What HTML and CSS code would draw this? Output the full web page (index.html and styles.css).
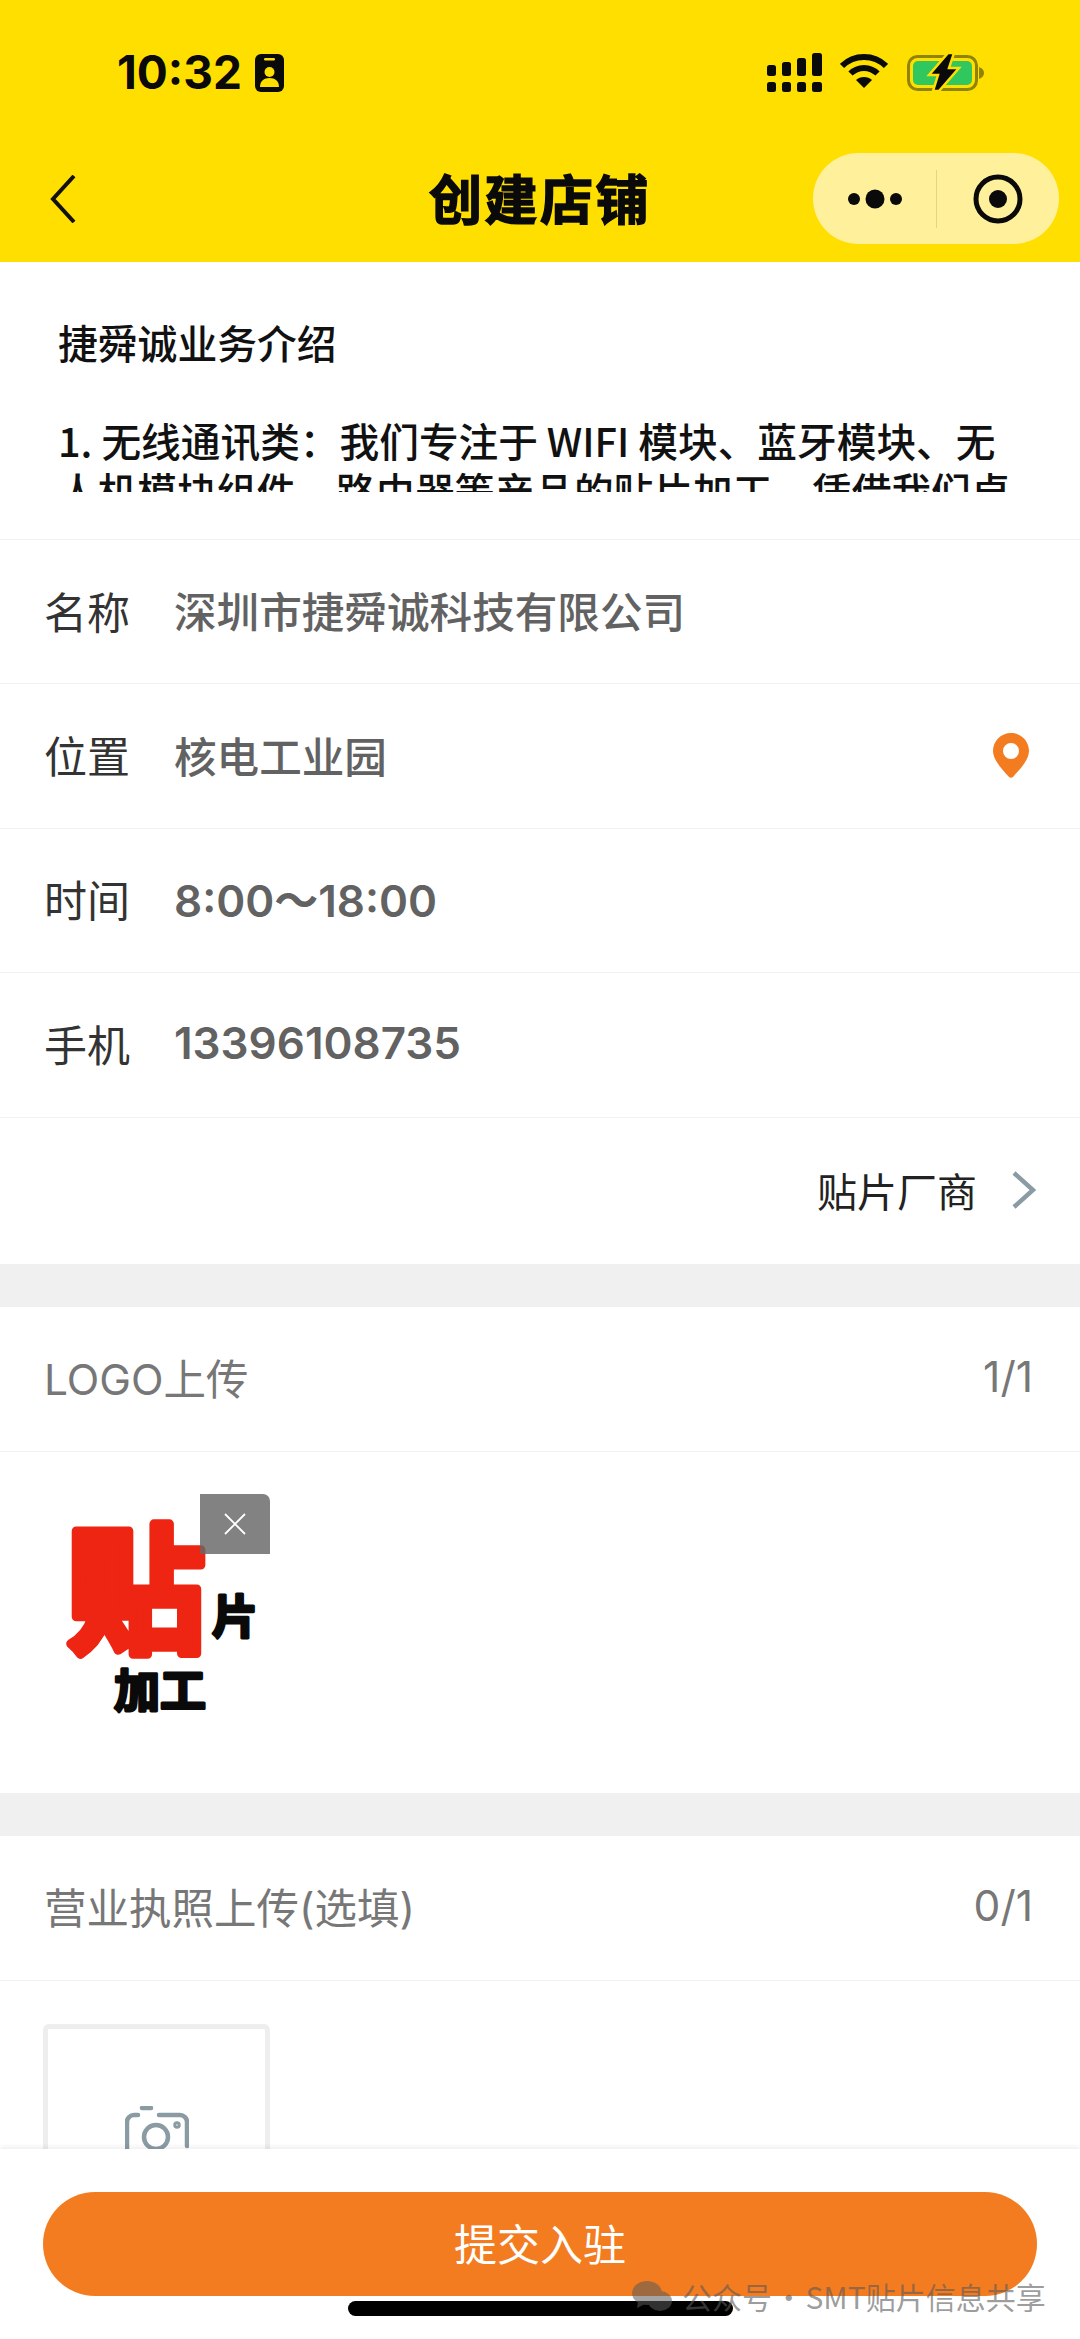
FILE: index.html
```html
<!DOCTYPE html>
<html lang="zh-CN">
<head>
<meta charset="utf-8">
<title>创建店铺</title>
<link rel="stylesheet" href="styles.css">
</head>
<body>
<div class="app">
  <header class="top">
    <div class="status">
      <div class="status-left">
        <span class="time">10:32</span>
        <svg class="badge" width="29" height="38" viewBox="0 0 29 38"><rect width="29" height="38" rx="6" fill="#0a0a0a"/><rect x="9" y="4" width="11" height="2.5" rx="1.2" fill="#ffdf00"/><circle cx="14.5" cy="18" r="5" fill="#ffdf00"/><path d="M5 33c0-6 4-9 9.500-9s9.500 3 9.500 9z" fill="#ffdf00"/></svg>
      </div>
      <div class="status-right">
        <svg width="55" height="39" viewBox="0 0 55 39" fill="#0a0a0a"><rect x="0" y="12" width="9" height="11" rx="2.500"/><rect x="15" y="9" width="9" height="14" rx="2.500"/><rect x="30" y="5" width="9" height="18" rx="2.500"/><rect x="45" y="0" width="10" height="23" rx="2.500"/><rect x="0" y="29" width="9" height="10" rx="2.500"/><rect x="15" y="29" width="9" height="10" rx="2.500"/><rect x="30" y="29" width="9" height="10" rx="2.500"/><rect x="45" y="29" width="10" height="10" rx="2.500"/></svg>
        <svg width="48" height="35" viewBox="0 0 48 35" fill="none" stroke="#0a0a0a" stroke-width="6"><path d="M2 13C14 1 34 1 46 13"/><path d="M10.500 20.500C18 13 30 13 37.500 20.500"/><path d="M24 35l-8-8c4-4 12-4 16 0z" fill="#0a0a0a" stroke="none"/></svg>
        <svg class="battery" width="79" height="38" viewBox="0 0 79 38"><rect x="1.500" y="3.500" width="68" height="33" rx="9" fill="none" stroke="#8f8300" stroke-width="3"/><rect x="6" y="8" width="59" height="24" rx="5" fill="#30c85e"/><path d="M72 14c3 1 5 3 5 6s-2 5-5 6z" fill="#8f8300"/><path d="M41 0L22 22h9l-5 16 6 0 20-23h-10l5-15z" fill="#0a0a0a" stroke="#ffdf00" stroke-width="2.500"/></svg>
      </div>
    </div>
    <div class="nav">
      <svg class="back" width="26" height="48" viewBox="0 0 26 48" fill="none" stroke="#111" stroke-width="4"><path d="M24 1L3 24l21 23"/></svg>
      <h1 class="title">创建店铺</h1>
      <div class="capsule">
        <div class="capsule-more">
          <svg width="58" height="20" viewBox="0 0 58 20" fill="#0a0a0a"><circle cx="6" cy="10" r="6"/><circle cx="27" cy="10" r="9.500"/><circle cx="48" cy="10" r="6"/></svg>
        </div>
        <div class="capsule-close">
          <svg width="50" height="50" viewBox="0 0 50 50"><circle cx="25" cy="25" r="22" fill="none" stroke="#0a0a0a" stroke-width="5"/><circle cx="25" cy="25" r="9" fill="#0a0a0a"/></svg>
        </div>
      </div>
    </div>
  </header>

  <section class="intro">
    <h2 class="intro-title">捷舜诚业务介绍</h2>
    <div class="intro-clip">
      <p class="intro-body">1. 无线通讯类：我们专注于 WIFI 模块、蓝牙模块、无<br>人机模块组件、路由器等产品的贴片加工，凭借我们卓</p>
    </div>
  </section>

  <section class="form">
    <div class="row"><span class="label">名称</span><span class="value">深圳市捷舜诚科技有限公司</span></div>
    <div class="row"><span class="label">位置</span><span class="value">核电工业园</span>
      <svg class="pin" width="36" height="45" viewBox="0 0 36 45"><path fill-rule="evenodd" fill="#f47c20" d="M18 0c10 0 18 8 18 18 0 9-9 18-16 26-1 1-3 1-4 0C9 36 0 27 0 18 0 8 8 0 18 0zm0 10a8 8 0 1 0 0 16 8 8 0 0 0 0-16z"/></svg>
    </div>
    <div class="row"><span class="label">时间</span><span class="value num">8:00～18:00</span></div>
    <div class="row"><span class="label">手机</span><span class="value num">13396108735</span></div>
    <div class="row-category">
      <span class="category">贴片厂商</span>
      <svg width="24" height="38" viewBox="0 0 24 38" fill="none" stroke="#8a9ba3" stroke-width="4.500"><path d="M2 2l19 17L2 36"/></svg>
    </div>
  </section>

  <section class="block">
    <div class="block-head"><span>LOGO上传</span><span>1/1</span></div>
    <div class="logo-area">
      <div class="logo">
        <svg width="226" height="226" viewBox="0 0 226 226">
          <text class="logo-main" x="23" y="147">贴</text>
          <text class="logo-small" x="191" y="139" text-anchor="middle">片</text>
          <text class="logo-small" x="116" y="213" text-anchor="middle">加工</text>
        </svg>
        <div class="remove">
          <svg width="24" height="24" viewBox="0 0 24 24" fill="none" stroke="#fff" stroke-width="1.800"><path d="M2 2l20 20M22 2L2 22"/></svg>
        </div>
      </div>
    </div>
  </section>

  <section class="block">
    <div class="block-head"><span>营业执照上传(选填)</span><span>0/1</span></div>
    <div class="upload-area">
      <div class="upload">
        <svg width="64" height="56" viewBox="0 0 64 56" fill="none" stroke="#8a9ba3" stroke-width="4.500" stroke-linecap="round"><path d="M17 2h9"/><path d="M13 9H9a7 7 0 0 0-7 7v40"/><path d="M34 9h21a7 7 0 0 1 7 7v24"/><circle cx="31" cy="31" r="12"/><circle cx="52" cy="19" r="1.500"/></svg>
      </div>
    </div>
  </section>

  <footer class="bottom">
    <button class="submit" type="button">提交入驻</button>
    <div class="home"></div>
  </footer>

  <div class="watermark">
    <svg width="40" height="30" viewBox="0 0 40 30" fill="#5a5a5a"><ellipse cx="15" cy="12" rx="15" ry="12"/><path d="M6 20l-1 7 8-4z"/><ellipse cx="28" cy="20" rx="12" ry="10"/></svg>
    <span>公众号 · SMT贴片信息共享</span>
  </div>
</div>
</body>
</html>
```
FILE: styles.css
```css
* { box-sizing: border-box; }
html, body { margin: 0; padding: 0; background: #fff; }
body { font-family: Inter, "Noto Sans CJK SC", sans-serif; color: #111; }

.app { position: relative; width: 1080px; height: 2339px; overflow: hidden; background: #fff; }

.top { height: 262px; background: #ffdf00; padding-top: 53px; }
.status { height: 100px; display: flex; justify-content: space-between; align-items: flex-start; padding: 0 94px 0 117px; }
.status-left { display: flex; align-items: center; gap: 13px; height: 39px; }
.time { font-size: 46px; font-weight: 700; line-height: 39px; color: #0a0a0a; }
.status-right { display: flex; align-items: flex-start; gap: 18px; }
.status-right .battery { margin-left: 1px; }

.nav { display: flex; align-items: center; justify-content: space-between; position: relative; padding: 0 21px 0 50px; height: 91px; }
.title { position: absolute; left: 0; right: 0; top: 14px; margin: 0; text-align: center; font-family: "Noto Sans CJK SC", sans-serif; font-size: 53px; line-height: 60px; font-weight: 700; color: #0a0a0a; -webkit-text-stroke: 1.500px #0a0a0a; letter-spacing: 2.500px; pointer-events: none; }
.capsule { width: 246px; height: 91px; border-radius: 46px; background: #fff09c; display: flex; align-items: center; }
.capsule-more { width: 124px; height: 58px; display: flex; align-items: center; justify-content: center; border-right: 1px solid #e6d57a; padding-left: 4px; }
.capsule-close { flex: 1; display: flex; align-items: center; justify-content: center; }

.intro { height: 278px; padding: 56px 0 0 58px; border-bottom: 1px solid #f2f2f2; font-family: "Noto Sans CJK SC", Inter, sans-serif; }
.intro-title { margin: 0; font-size: 39.8px; line-height: 48px; font-weight: 500; color: #111; }
.intro-clip { margin-top: 49px; height: 77px; overflow: hidden; }
.intro-body { margin: 0; font-size: 39.7px; line-height: 50px; font-weight: 500; color: #111; white-space: nowrap; }

.row { height: 144.4px; display: flex; align-items: center; padding: 0 44px 4px; border-bottom: 1px solid #f2f2f2; }
.label { width: 130px; font-size: 43px; color: #333; font-family: "Noto Sans CJK SC", sans-serif; }
.value { flex: 1; font-size: 42.6px; font-weight: 500; color: #626262; font-family: "Noto Sans CJK SC", sans-serif; }
.value.num { font-family: Inter, "Noto Sans CJK SC", sans-serif; font-weight: 600; font-size: 44px; }
.pin { margin-right: 7px; margin-top: 2px; }

.row-category { height: 146.4px; display: flex; align-items: center; justify-content: flex-end; gap: 35px; padding: 0 44px 2px 0; }
.category { font-size: 40px; color: #222; font-family: "Noto Sans CJK SC", sans-serif; }

.block { border-top: 43px solid #f0f0f0; }
.block-head { height: 145px; display: flex; align-items: center; justify-content: space-between; padding: 0 47px 5px 44px; border-bottom: 1px solid #f2f2f2; font-size: 42.5px; color: #777; }
.logo-area { height: 341px; padding: 42px 0 0 44px; }
.logo { position: relative; width: 226px; height: 226px; }
.logo svg { display: block; }
.logo-main { font-family: "Noto Sans CJK SC", sans-serif; font-weight: 700; font-size: 138px; fill: #ee2512; stroke: #ee2512; stroke-width: 9px; stroke-linejoin: round; }
.logo-small { font-family: "Noto Sans CJK SC", sans-serif; font-weight: 700; font-size: 46px; fill: #0a0a0a; stroke: #0a0a0a; stroke-width: 3px; stroke-linejoin: round; }
.remove { position: absolute; top: 0; right: 0; width: 70px; height: 60px; background: rgba(102, 102, 102, 0.82); border-top-right-radius: 7px; display: flex; align-items: center; justify-content: center; }

.upload-area { padding: 43px 0 0 43px; }
.upload { width: 227px; height: 227px; border: 5px solid #eeeeee; border-radius: 6px; display: flex; justify-content: center; padding-top: 77px; }

.bottom { position: absolute; left: 0; right: 0; bottom: 0; height: 190px; background: #fff; box-shadow: 0 -2px 5px rgba(0, 0, 0, 0.07); padding: 43px 43px 0; }
.submit { display: block; width: 994px; height: 104px; border: 0; border-radius: 52px; background: #f47c20; color: #fff; font-family: "Noto Sans CJK SC", sans-serif; font-size: 43px; padding: 0 0 4px; }
.home { width: 385px; height: 15px; margin: 5px auto 0; border-radius: 8px; background: #000; }

.watermark { position: absolute; left: 632px; top: 2276px; display: flex; align-items: center; gap: 10px; color: rgba(90, 90, 90, 0.6); font-family: "Noto Sans CJK SC", sans-serif; font-size: 30px; line-height: 40px; word-spacing: -5px; }
.watermark svg { opacity: 0.55; }
```
